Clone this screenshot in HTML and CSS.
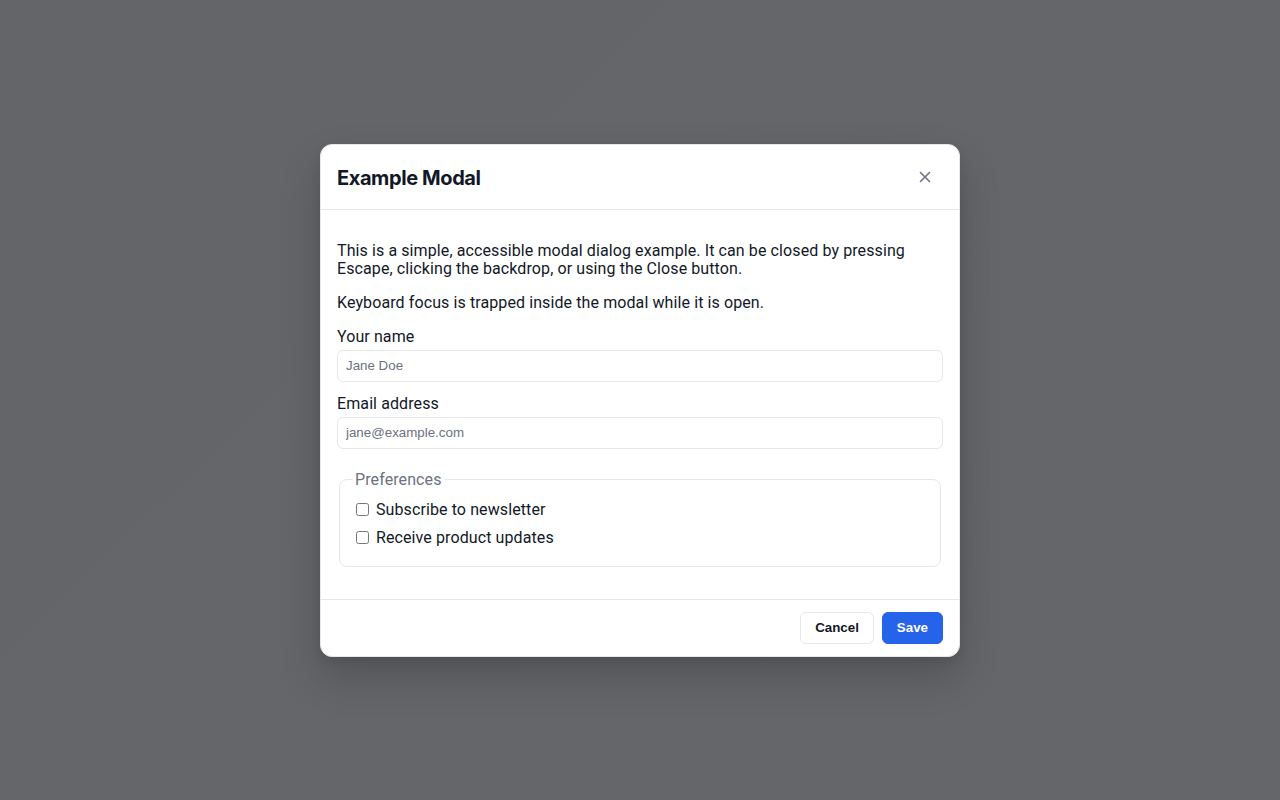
FILE: index.html
```html
<!DOCTYPE html>
<html lang="en">
<head>
<meta charset="utf-8">
<title>Example Modal</title>
<link rel="stylesheet" href="styles.css">
</head>
<body>
<div class="backdrop">
  <div class="modal" role="dialog" aria-modal="true" aria-labelledby="modal-title">
    <header class="modal-header">
      <h2 class="modal-title" id="modal-title">Example Modal</h2>
      <button class="close-btn" type="button" aria-label="Close">
        <svg width="12" height="12" viewBox="0 0 12 12" aria-hidden="true"><path d="M1.5 1.5 L10.5 10.5 M10.5 1.5 L1.5 10.5" stroke="currentColor" stroke-width="1.6" stroke-linecap="round" fill="none"/></svg>
      </button>
    </header>
    <div class="modal-body">
      <p class="text">This is a simple, accessible modal dialog example. It can be closed by pressing Escape, clicking the backdrop, or using the Close button.</p>
      <p class="text">Keyboard focus is trapped inside the modal while it is open.</p>
      <div class="field">
        <label class="label" for="name">Your name</label>
        <input class="input" id="name" type="text" placeholder="Jane Doe">
      </div>
      <div class="field">
        <label class="label" for="email">Email address</label>
        <input class="input" id="email" type="email" placeholder="jane@example.com">
      </div>
      <fieldset class="prefs">
        <legend class="legend">Preferences</legend>
        <label class="check"><input type="checkbox" class="checkbox"> Subscribe to newsletter</label>
        <label class="check"><input type="checkbox" class="checkbox"> Receive product updates</label>
      </fieldset>
    </div>
    <footer class="modal-footer">
      <button class="btn btn-secondary" type="button">Cancel</button>
      <button class="btn btn-primary" type="button">Save</button>
    </footer>
  </div>
</div>
</body>
</html>
```
FILE: styles.css
```css
html, body {
  margin: 0;
  padding: 0;
  height: 100%;
}
body {
  font-family: Roboto, "Noto Sans", "Liberation Sans", sans-serif;
  color: #111827;
}
.backdrop {
  height: 100%;
  display: flex;
  align-items: center;
  justify-content: center;
  background: linear-gradient(135deg, #646569 0%, #65666a 100%);
}
.modal {
  width: 640px;
  box-sizing: border-box;
  background: #fff;
  border: 1px solid #e5e7eb;
  border-radius: 12px;
  box-shadow: 0 20px 40px rgba(0, 0, 0, 0.18), 0 4px 10px rgba(0, 0, 0, 0.08);
  overflow: hidden;
}
.modal-header {
  display: flex;
  align-items: center;
  justify-content: space-between;
  padding: 16px;
  border-bottom: 1px solid #e5e7eb;
}
.modal-title {
  margin: 0;
  font-family: Inter, Roboto, sans-serif;
  font-size: 20px;
  font-weight: 700;
  line-height: 28px;
  letter-spacing: -0.4px;
  padding-top: 3px;
}
.close-btn {
  width: 36px;
  height: 32px;
  display: flex;
  align-items: center;
  justify-content: center;
  background: transparent;
  border: 0;
  border-radius: 6px;
  color: #6b7280;
  padding: 0;
  margin: 0;
}
.modal-body {
  padding: 16px;
  letter-spacing: 0.1px;
}
.text {
  margin: 16px 0;
  font-size: 16px;
  line-height: 18px;
}
.field {
  margin-bottom: 13px;
}
.label {
  display: block;
  font-size: 16px;
  line-height: 18px;
  margin-bottom: 4px;
}
.input {
  display: block;
  width: 100%;
  box-sizing: border-box;
  height: 32px;
  padding: 0 8px;
  border: 1px solid #e5e7eb;
  border-radius: 6px;
  font-family: "Liberation Sans", Arial, sans-serif;
  font-size: 13.33px;
  letter-spacing: 0;
  color: #111827;
  background: #fff;
}
.input::placeholder {
  color: #6b7280;
}
.prefs {
  margin: 22px 2px 16px;
  padding: 11px 16px 18px;
  border: 1px solid #e5e7eb;
  border-radius: 8px;
}
.legend {
  padding: 0 2px;
  margin-left: -3px;
  color: #6b7280;
  font-size: 16px;
  line-height: 18px;
}
.check {
  display: flex;
  align-items: center;
  height: 20px;
  font-size: 16px;
  line-height: 18px;
  margin-bottom: 8px;
}
.check:last-child {
  margin-bottom: 0;
}
.checkbox {
  width: 13px;
  height: 13px;
  margin: 0 7px 0 0;
}
.modal-footer {
  display: flex;
  justify-content: flex-end;
  gap: 8px;
  padding: 12px 16px;
  border-top: 1px solid #e5e7eb;
}
.btn {
  height: 32px;
  padding: 0 14px;
  border-radius: 6px;
  font-family: "Liberation Sans", Arial, sans-serif;
  font-size: 13.33px;
  font-weight: 700;
  cursor: pointer;
}
.btn-secondary {
  background: #fff;
  color: #111827;
  border: 1px solid #e5e7eb;
}
.btn-primary {
  background: #2563eb;
  color: #fff;
  border: 1px solid #2563eb;
}
```
